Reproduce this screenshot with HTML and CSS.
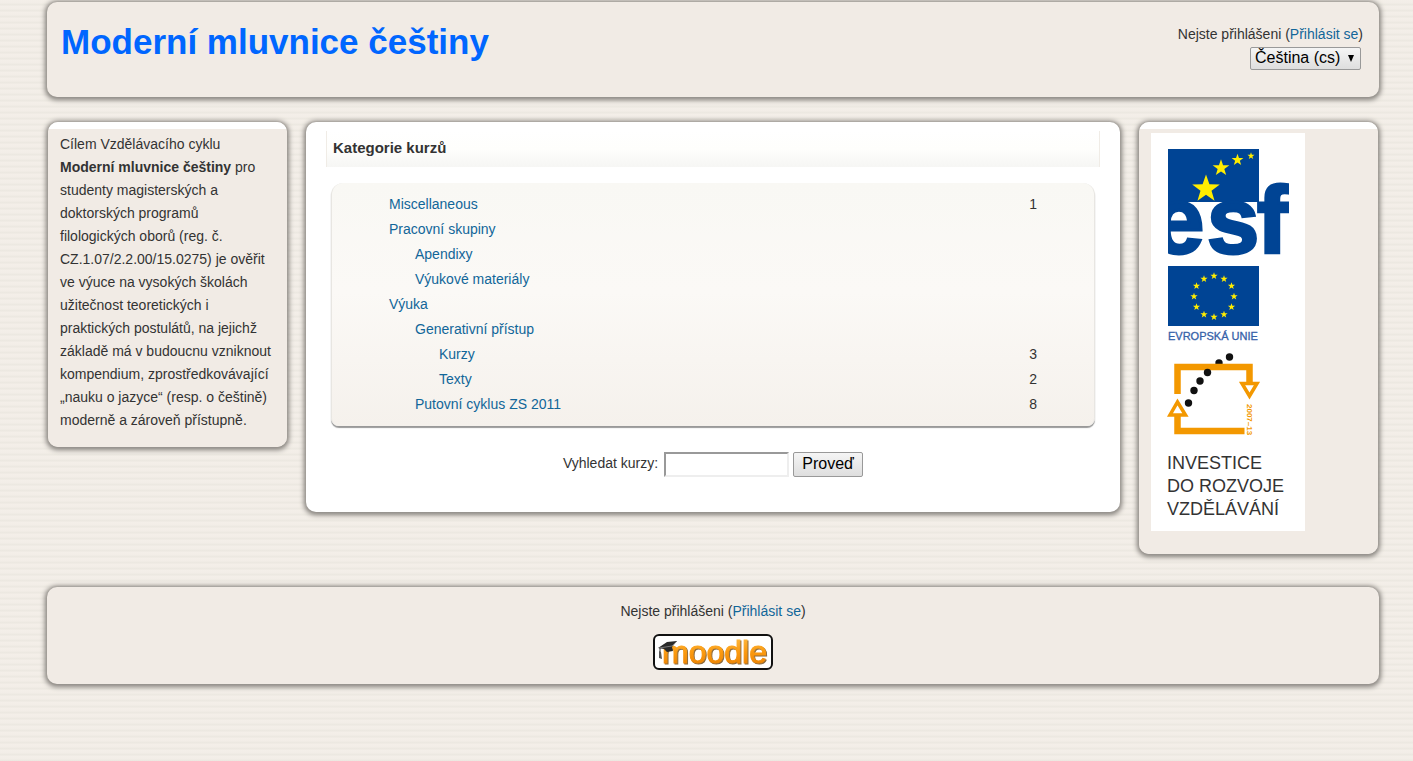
FILE: index.html
```html
<!DOCTYPE html>
<html lang="cs">
<head>
<meta charset="utf-8">
<title>Moderní mluvnice češtiny</title>
<link rel="stylesheet" href="styles.css">
</head>
<body>
<div class="page">
  <header class="panel header">
    <h1 class="title">Moderní mluvnice češtiny</h1>
    <div class="header-menu">
      <div class="login">Nejste přihlášeni (<a href="#">Přihlásit se</a>)</div>
      <div class="lang">
        <select class="lang-select" aria-label="Jazyk"><option>Čeština (cs)</option></select>
        <svg class="lang-arrow" width="6" height="7" viewBox="0 0 6 7" aria-hidden="true"><path d="M0 0H6L3 7Z"/></svg>
      </div>
    </div>
  </header>

  <div class="columns">
    <aside class="panel side side-text">
      <p>Cílem Vzdělávacího cyklu <strong>Moderní mluvnice češtiny</strong> pro studenty magisterských a doktorských programů filologických oborů (reg. č. CZ.1.07/2.2.00/15.0275) je ověřit ve výuce na vysokých školách užitečnost teoretických i praktických postulátů, na jejichž základě má v budoucnu vzniknout kompendium, zprostředkovávající „nauku o jazyce“ (resp. o češtině) moderně a zároveň přístupně.</p>
    </aside>

    <main class="panel main">
      <h2 class="heading">Kategorie kurzů</h2>
      <div class="category-box">
        <table class="categories">
          <tbody>
            <tr><td class="level-1"><a href="#">Miscellaneous</a></td><td class="count">1</td></tr>
            <tr><td class="level-1"><a href="#">Pracovní skupiny</a></td><td class="count"></td></tr>
            <tr><td class="level-2"><a href="#">Apendixy</a></td><td class="count"></td></tr>
            <tr><td class="level-2"><a href="#">Výukové materiály</a></td><td class="count"></td></tr>
            <tr><td class="level-1"><a href="#">Výuka</a></td><td class="count"></td></tr>
            <tr><td class="level-2"><a href="#">Generativní přístup</a></td><td class="count"></td></tr>
            <tr><td class="level-3"><a href="#">Kurzy</a></td><td class="count">3</td></tr>
            <tr><td class="level-3"><a href="#">Texty</a></td><td class="count">2</td></tr>
            <tr><td class="level-2"><a href="#">Putovní cyklus ZS 2011</a></td><td class="count">8</td></tr>
          </tbody>
        </table>
      </div>
      <form class="search">
        <label for="search">Vyhledat kurzy:</label>
        <input class="search-input" id="search" type="text">
        <button class="search-button" type="button">Proveď</button>
      </form>
    </main>

    <aside class="panel side side-logo">
      <svg class="esf" width="154" height="398" viewBox="0 0 154 398" role="img" aria-label="esf, Evropská unie, Investice do rozvoje vzdělávání">
        <defs>
          <path id="star" d="M0 -10L2.35 -3.24 9.51 -3.09 3.8 1.24 5.88 8.09 0 4 -5.88 8.09 -3.8 1.24 -9.51 -3.09 -2.35 -3.24Z"/>
          <clipPath id="esf-clip"><rect x="17" y="45" width="121" height="90"/></clipPath>
        </defs>
        <rect width="154" height="398" fill="#fff"/>
        <path d="M17 16H108V69H17Z" fill="#004494"/>
        <g fill="#ffed00">
          <use href="#star" transform="translate(55 56) scale(1.45)"/>
          <use href="#star" transform="translate(70 35) scale(.88)"/>
          <use href="#star" transform="translate(86.500 27) scale(.62)"/>
          <use href="#star" transform="translate(100 23) scale(.37)"/>
        </g>
        <path d="M17 68H29L17 78Z" fill="#004494"/>
        <g clip-path="url(#esf-clip)"><text class="esf-text" x="1 56 106" y="120">esf</text></g>
        <rect x="17" y="133" width="91" height="60" fill="#004494"/>
        <g fill="#ffed00">
          <use href="#star" transform="translate(63 143) scale(.38)"/>
          <use href="#star" transform="translate(73 146) scale(.38)"/>
          <use href="#star" transform="translate(80.500 153) scale(.38)"/>
          <use href="#star" transform="translate(83 163.500) scale(.38)"/>
          <use href="#star" transform="translate(80.500 174) scale(.38)"/>
          <use href="#star" transform="translate(73 181.500) scale(.38)"/>
          <use href="#star" transform="translate(63 184) scale(.38)"/>
          <use href="#star" transform="translate(53 181.500) scale(.38)"/>
          <use href="#star" transform="translate(45.500 174) scale(.38)"/>
          <use href="#star" transform="translate(43 163.500) scale(.38)"/>
          <use href="#star" transform="translate(45.500 153) scale(.38)"/>
          <use href="#star" transform="translate(53 146) scale(.38)"/>
        </g>
        <text class="eu-text" x="17" y="207">EVROPSKÁ UNIE</text>
        <g fill="#111">
          <circle cx="78.500" cy="224" r="3.700"/><circle cx="68" cy="230" r="3.700"/>
        </g>
        <path d="M26.500 261V234H98.500V251M26.500 281V298H93.500" fill="none" stroke="#f39800" stroke-width="6.500"/>
        <path d="M91 250.500H106L98.500 263ZM19 282H34.500L26.500 269Z" fill="#fff" stroke="#f39800" stroke-width="3.500"/>
        <g fill="#111">
          <circle cx="56.500" cy="239.500" r="3.700"/><circle cx="49" cy="248" r="3.700"/>
          <circle cx="43" cy="257.500" r="3.700"/><circle cx="37.500" cy="270" r="3.700"/>
        </g>
        <text class="years" transform="translate(96 271) rotate(90)">2007–13</text>
        <g class="invest">
          <text x="16" y="336">INVESTICE</text>
          <text x="16" y="359">DO ROZVOJE</text>
          <text x="16" y="382">VZDĚLÁVÁNÍ</text>
        </g>
      </svg>
    </aside>
  </div>

  <footer class="panel footer">
    <div class="login">Nejste přihlášeni (<a href="#">Přihlásit se</a>)</div>
    <a class="moodle" href="#">
      <svg width="120" height="36" viewBox="0 0 120 36" role="img" aria-label="moodle">
        <defs>
          <linearGradient id="orange" x1="0" y1="0" x2="0" y2="1">
            <stop offset="0" stop-color="#ffc04a"/><stop offset=".5" stop-color="#fb9a10"/><stop offset="1" stop-color="#e87d00"/>
          </linearGradient>
        </defs>
        <rect x="1" y="1" width="118" height="34" rx="5" fill="#fff" stroke="#111" stroke-width="2"/>
        <text class="moodle-text" x="9" y="29">moodle</text>
        <path d="M5 14L14 8 24 7 19 13 20 17 14 18 11 15Z" fill="#292929"/>
        <path d="M6 14L19 12 24 7" fill="none" stroke="#777"/>
        <path d="M7 14V18" fill="none" stroke="#333"/>
        <path d="M6 17L8 18 9 25 6 24Z" fill="#555"/>
      </svg>
    </a>
  </footer>
</div>
</body>
</html>
```
FILE: styles.css
```css
* {
  box-sizing: border-box;
}

body {
  margin: 0;
  min-height: 100vh;
  background: repeating-linear-gradient(#f4efe9 0, #f2ede7 3px, #ebe7e0 5px, #f4efe9 6px);
  color: #333;
  font: 14px/23px "Liberation Sans", Arial, sans-serif;
}

a {
  color: #116699;
  text-decoration: none;
}

.page {
  padding: 2px 34px 72px 47px;
}

.panel {
  border-radius: 10px;
  background: #f1ebe5;
  box-shadow: 0 0 2px #a09c97, 0 1px 5px 2px #85817c;
}

.header {
  display: flex;
  justify-content: space-between;
  align-items: flex-start;
  min-height: 95px;
  padding: 20px 16px 20px 14px;
}

.title {
  margin: 0;
  color: #0066ff;
  font-size: 35px;
  line-height: 40px;
}

.header-menu {
  display: flex;
  flex-direction: column;
  align-items: flex-end;
  padding-top: 1px;
}

.lang {
  position: relative;
  margin: 1px 2px 0 0;
}

.lang-select {
  display: block;
  appearance: none;
  width: 111px;
  height: 23px;
  padding: 0 4px 2px;
  border: 1px solid #999;
  border-radius: 2px;
  background: linear-gradient(#f5f5f5, #dedede);
  color: #000;
  font: 16px/20px "Liberation Sans", Arial, sans-serif;
}

.lang-arrow {
  position: absolute;
  top: 8px;
  right: 7px;
  pointer-events: none;
}

.columns {
  display: flex;
  align-items: flex-start;
  gap: 19px;
  margin: 25px 0 33px;
  padding: 0 1px;
}

.side {
  flex: 0 0 239px;
  background: linear-gradient(#fff 7px, #f1ebe5 7px);
}

.side-text {
  padding: 11px 13px 15px 12px;
}

.side-text p {
  margin: 0;
}

.side-logo {
  padding: 11px 12px 23px;
}

.esf {
  display: block;
}

.main {
  flex: 1;
  min-width: 0;
  padding: 9px 20px 35px;
  background: #fff;
}

.heading {
  margin: 0 0 16px;
  padding: 5px 6px 8px;
  border: solid #f0ece6;
  border-width: 0 1px;
  background: linear-gradient(#fff, #fefefc 50%, #f6f6f4);
  font-size: 15px;
  line-height: 23px;
}

.category-box {
  margin: 0 5px 26px;
  padding: 9px 57px 9px 56px;
  border: solid #e8e6e2;
  border-width: 0 1px;
  border-radius: 12px 12px 8px 8px;
  background: linear-gradient(#f9f8f4, #fbf9f6 45%, #f5f1ec);
  box-shadow: 0 2px 1px #999;
}

.categories {
  width: 100%;
  border-collapse: collapse;
  line-height: 25px;
}

.categories td {
  height: 25px;
  padding: 0;
}

.categories .level-1 {
  padding-left: 1px;
}

.categories .level-2 {
  padding-left: 27px;
}

.categories .level-3 {
  padding-left: 51px;
}

.categories .count {
  width: 10px;
  text-align: right;
}

.search {
  display: flex;
  justify-content: center;
  gap: 4px;
}

.search-input {
  width: 125px;
  height: 25px;
  margin-left: 2px;
  border: 2px solid;
  border-color: #999 #eee #eee #999;
  background: #fff;
  font: 16px "Liberation Sans", Arial, sans-serif;
}

.search-button {
  width: 70px;
  height: 25px;
  padding: 0 0 2px;
  border: 1px solid #999;
  border-radius: 2px;
  background: linear-gradient(#f5f5f5, #dedede);
  color: #000;
  font: 16px/20px "Liberation Sans", Arial, sans-serif;
}

.footer {
  display: flex;
  flex-direction: column;
  align-items: center;
  gap: 11px;
  padding: 13px 0 14px;
}

.moodle,
.moodle svg {
  display: block;
}

.esf-text {
  fill: #004494;
  stroke: #004494;
  stroke-width: 3px;
  font: bold 94px "Liberation Sans", Arial, sans-serif;
}

.eu-text {
  fill: #3561a8;
  stroke: #3561a8;
  stroke-width: 0.3px;
  font: 11px "Liberation Sans", Arial, sans-serif;
}

.years {
  fill: #f39800;
  font: bold 8px "Liberation Sans", Arial, sans-serif;
}

.invest {
  fill: #333;
  font: 18px "Liberation Sans", Arial, sans-serif;
}

.moodle-text {
  fill: url(#orange);
  stroke: url(#orange);
  stroke-width: 1px;
  font: 32px "Liberation Sans", Arial, sans-serif;
  filter: drop-shadow(1px 1px 0 #8d6a3d);
}
```
